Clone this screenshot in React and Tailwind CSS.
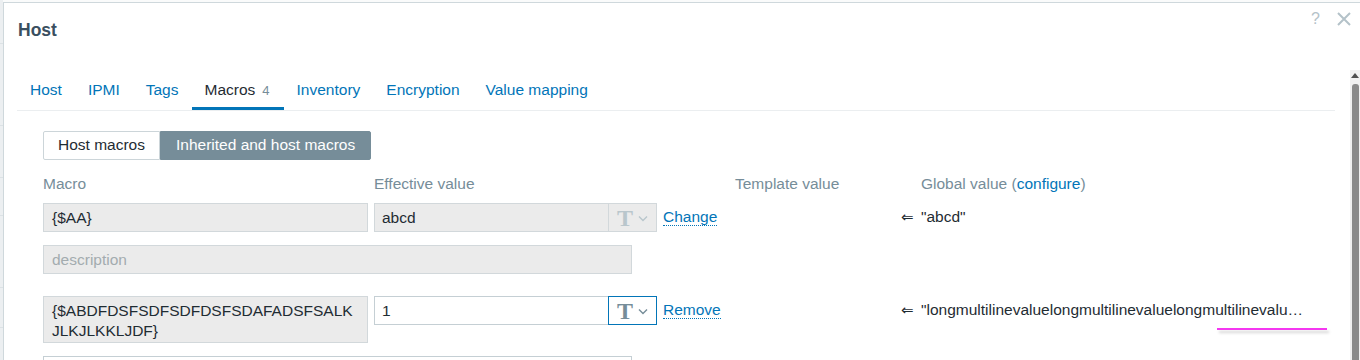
import React from "react";

const FONT = { fontFamily: '"Liberation Sans", Arial, sans-serif' };

function TButton({ active }) {
  return (
    <div
      className={
        "w-[49px] h-[29px] flex items-center justify-center gap-[5px] border " +
        (active
          ? "border-[#0275b8] bg-white"
          : "border-[#d2d8db] bg-[#ebebeb]")
      }
    >
      <span
        className={
          "text-[24px] leading-[24px] font-bold " +
          (active ? "text-[#768d99]" : "text-[#b9c6cc]")
        }
        style={{ fontFamily: '"Liberation Serif", "Times New Roman", serif' }}
      >
        T
      </span>
      <svg width="10" height="7" viewBox="0 0 10 7" className="mt-[2px]">
        <path
          d="M1 1.5 L5 5.5 L9 1.5"
          fill="none"
          stroke={active ? "#768d99" : "#b9c6cc"}
          strokeWidth="1.4"
        />
      </svg>
    </div>
  );
}

function LinkText({ children }) {
  return (
    <span className="text-[#0275b8] border-b border-dotted border-[#0275b8] leading-[17px]">
      {children}
    </span>
  );
}

function Arrow() {
  return (
    <div
      className="w-[20px] h-[29px] flex items-center text-[#1f2c33]"
      style={{ fontFamily: '"DejaVu Sans", sans-serif' }}
    >
      <span className="text-[15px] leading-[15px]">⇐</span>
    </div>
  );
}

export default function App() {
  const tabs = ["Host", "IPMI", "Tags", "Macros", "Inventory", "Encryption", "Value mapping"];
  return (
    <div
      className="w-[1360px] h-[360px] overflow-hidden flex bg-[#fafbfb] text-[#1f2c33]"
      style={FONT}
    >
      {/* page gutter */}
      <div className="w-[3px] h-full bg-[#eceff1] flex flex-col shrink-0">
        <div className="h-px bg-[#dce2e5] mt-[43px]" />
        <div className="h-px bg-[#dce2e5] mt-[81px]" />
        <div className="h-px bg-[#dce2e5] mt-[51px]" />
        <div className="h-px bg-[#dce2e5] mt-[37px]" />
        <div className="h-px bg-[#dce2e5] mt-[71px]" />
        <div className="h-px bg-[#dce2e5] mt-[39px]" />
      </div>

      {/* dialog */}
      <div className="flex-1 mt-[2px] bg-white border-l border-t border-[#cfd8dc] flex flex-col relative">
        {/* header */}
        <div className="h-[67px] flex justify-between items-start pl-[14px] pr-[9px] pt-[8px] shrink-0">
          <div className="mt-[8px] text-[17.5px] leading-[22px] font-bold text-[#3a4f60]">Host</div>
          <div className="h-[16px] flex items-center">
            <span className="text-[16px] leading-[16px] text-[#b4c2c9]">?</span>
            <svg width="14" height="14" viewBox="0 0 14 14" className="ml-[17px]">
              <path d="M1 1 L13 13 M13 1 L1 13" stroke="#b4c2c9" strokeWidth="2" />
            </svg>
          </div>
        </div>

        {/* body */}
        <div className="flex-1 flex min-h-0">
          <div className="flex-1 pl-[13px] pr-[15px]">
            {/* tabs */}
            <div className="flex border-b border-[#ebeef0] text-[15.5px] leading-[20px]">
              {tabs.map((t) => (
                <div
                  key={t}
                  className={
                    "pl-[13px] pt-[10px] pb-[6px] border-b-[3px] " +
                    (t === "Macros"
                      ? "pr-[14px] border-[#0275b8] text-[#1f2c33]"
                      : "pr-[13px] border-transparent text-[#0275b8]")
                  }
                >
                  {t}
                  {t === "Macros" && (
                    <span className="ml-[7px] text-[13px] text-[#768d99]">4</span>
                  )}
                </div>
              ))}
            </div>

            {/* panel */}
            <div className="pl-[26px] pt-[20px] text-[15.5px]">
              {/* radio */}
              <div className="flex h-[29px]">
                <div className="px-[14px] border border-[#ccd5d9] rounded-l-[2px] bg-white leading-[26px] text-[#1f2c33]">
                  Host macros
                </div>
                <div className="px-[15px] border border-[#768d99] rounded-r-[2px] bg-[#768d99] leading-[26px] text-white">
                  Inherited and host macros
                </div>
              </div>

              {/* column headers */}
              <div className="flex mt-[14px] h-[22px] leading-[20px] text-[#768d99]">
                <div className="w-[325px]">Macro</div>
                <div className="w-[361px] ml-[6px]">Effective value</div>
                <div className="w-[186px]">Template value</div>
                <div className="flex-1">
                  Global value (<span className="text-[#0275b8]">configure</span>)
                </div>
              </div>

              {/* row 1 */}
              <div className="flex items-start mt-[7px]">
                <div className="w-[325px] h-[29px] px-[8px] flex items-center border border-[#d2d8db] bg-[#ebebeb]">
                  {"{$AA}"}
                </div>
                <div className="w-[283px] ml-[6px] flex">
                  <div className="flex-1 h-[29px] px-[7px] flex items-center border-y border-l border-[#d2d8db] bg-[#ebebeb]">
                    abcd
                  </div>
                  <TButton />
                </div>
                <div className="w-[72px] ml-[6px] h-[28px] flex items-center">
                  <LinkText>Change</LinkText>
                </div>
                <div className="w-[166px]" />
                <Arrow />
                <div className="flex-1 h-[28px] flex items-center">"abcd"</div>
              </div>

              {/* description 1 */}
              <div className="mt-[13px] w-[589px] h-[29px] px-[8px] flex items-center border border-[#d2d8db] bg-[#ebebeb] text-[#a3abaf]">
                description
              </div>

              {/* row 2 */}
              <div className="flex items-start mt-[22px]">
                <div className="w-[325px] h-[47px] px-[8px] py-[4px] leading-[20px] border border-[#d2d8db] bg-[#ebebeb] break-all overflow-hidden">
                  {"{$ABDFDSFSDFSDFDSFSDAFADSFSALKJLKJLKKLJDF}"}
                </div>
                <div className="w-[283px] ml-[6px] flex">
                  <div className="flex-1 h-[29px] px-[7px] flex items-center border-y border-l border-[#c5cfd4] bg-white">
                    1
                  </div>
                  <TButton active />
                </div>
                <div className="w-[72px] ml-[6px] h-[28px] flex items-center">
                  <LinkText>Remove</LinkText>
                </div>
                <div className="w-[166px]" />
                <Arrow />
                <div className="flex-1 h-[28px] flex items-center whitespace-nowrap">
                  "longmultilinevaluelongmultilinevaluelongmultilinevalu…
                </div>
              </div>

              {/* description 2 */}
              <div className="mt-[13px] w-[589px] h-[29px] border border-[#c5cfd4] bg-white" />
            </div>
          </div>

          {/* scrollbar */}
          <div className="w-[10px] bg-[#f1f1f1] flex flex-col items-center shrink-0">
            <svg width="8" height="6" viewBox="0 0 8 6" className="mt-[3px]">
              <path d="M0 5 L4 0 L8 5 Z" fill="#505050" />
            </svg>
            <div className="mt-[5px] w-[7px] flex-1 bg-[#8b8b8b] rounded-t-[3px]" />
          </div>
        </div>

        {/* pink hint line */}
        <div className="absolute left-[1213px] top-[325px] w-[110px] h-[2px] bg-[#f437f0] shadow-[2px_3px_3px_rgba(0,0,0,0.18)]" />
      </div>
    </div>
  );
}
